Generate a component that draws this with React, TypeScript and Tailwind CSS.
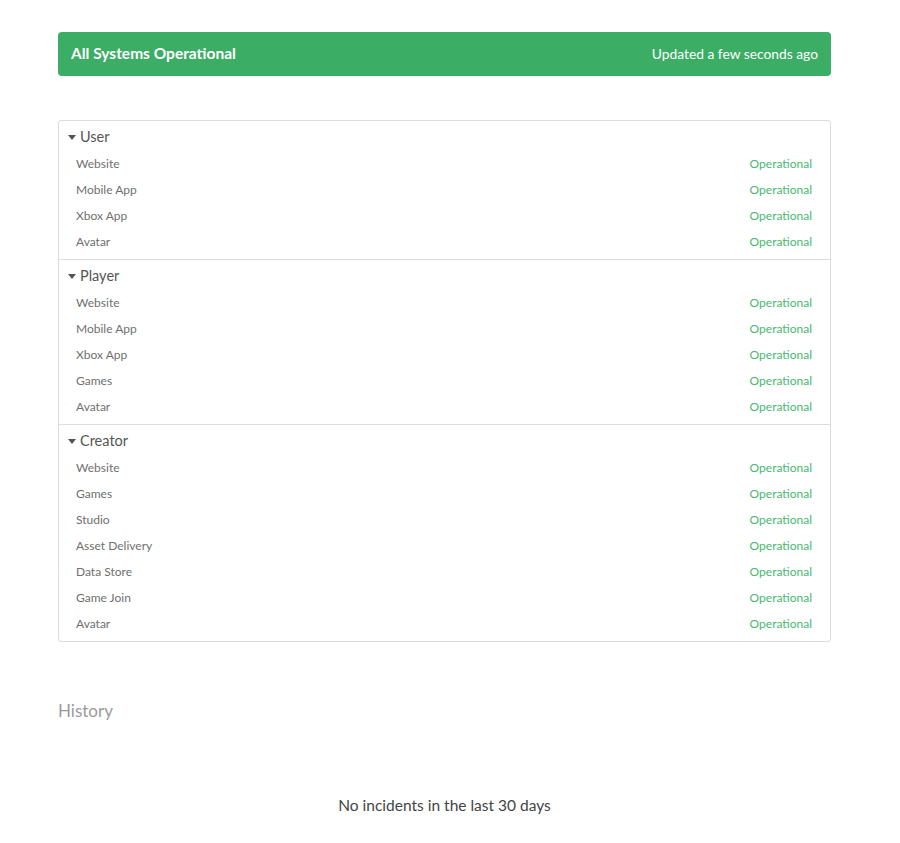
import React from 'react';

type Group = {
  name: string;
  services: string[];
};

const groups: Group[] = [
  { name: 'User', services: ['Website', 'Mobile App', 'Xbox App', 'Avatar'] },
  { name: 'Player', services: ['Website', 'Mobile App', 'Xbox App', 'Games', 'Avatar'] },
  {
    name: 'Creator',
    services: ['Website', 'Games', 'Studio', 'Asset Delivery', 'Data Store', 'Game Join', 'Avatar'],
  },
];

function Caret() {
  return (
    <svg width="8" height="5" viewBox="0 0 8 5" className="mr-[4px] mt-[1px]">
      <path d="M0 0 L8 0 L4 5 Z" fill="#555" />
    </svg>
  );
}

export default function App() {
  return (
    <div className="min-h-[843px] bg-white font-['Lato','Open_Sans',sans-serif]">
      <div className="ml-[58px] w-[773px] pt-[32px]">
        {/* Status banner */}
        <div className="flex h-[44px] items-center justify-between rounded-[4px] bg-[#3bad65] pl-[13px] pr-[13px] text-white">
          <span className="text-[15.5px] font-bold">All Systems Operational</span>
          <span className="text-[13.8px]">Updated a few seconds ago</span>
        </div>

        {/* Components */}
        <div className="mt-[44px] rounded-[3px] border border-[#dcdcdc]">
          {groups.map((group, i) => (
            <div key={group.name} className={i > 0 ? 'border-t border-[#dcdcdc] pt-[6px] pb-[4px]' : 'pt-[6px] pb-[4px]'}>
              <div className="flex h-[20px] items-center pl-[9px] text-[14.5px] leading-[20px] text-[#555]">
                <Caret />
                {group.name}
              </div>
              <div className="mt-[4px]">
                {group.services.map((s) => (
                  <div key={s} className="flex h-[26px] items-center justify-between pl-[17px] pr-[18px] text-[12px]">
                    <span className="text-[#6f6f6f]">{s}</span>
                    <span className="text-[#48b870]">Operational</span>
                  </div>
                ))}
              </div>
            </div>
          ))}
        </div>

        {/* History */}
        <h2 className="mt-[58px] text-[17px] leading-[22px] text-[#9a9a9a]">History</h2>
        <p className="mt-[72px] text-center text-[15.5px] text-[#444]">No incidents in the last 30 days</p>
      </div>
    </div>
  );
}
